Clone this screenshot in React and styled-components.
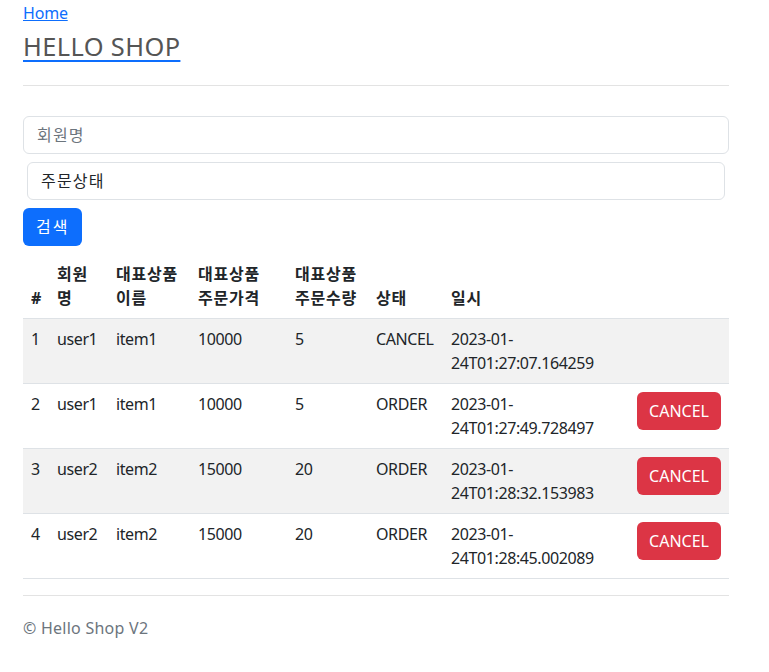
import React from "react";
import styled, { createGlobalStyle } from "styled-components";

const Global = createGlobalStyle`
  * { box-sizing: border-box; }
  body {
    margin: 0;
    font-family: "Noto Sans", "Noto Sans CJK KR", sans-serif;
    font-size: 16px;
    line-height: 1.5;
    color: #212529;
    background: #fff;
  }
`;

const Page = styled.div`
  width: 706px;
  margin-left: 23px;
  padding-top: 1px;
`;

const HomeLink = styled.a`
  display: inline-block;
  color: #0d6efd;
  text-decoration: underline;
  line-height: 24px;
  letter-spacing: -0.2px;
`;

const Title = styled.h3`
  margin: 6px 0 0;
  font-size: 25.4px;
  font-weight: 400;
  line-height: 1.2;
  letter-spacing: 0.4px;
`;

const TitleLink = styled.a`
  color: #555;
  text-decoration: underline;
  text-decoration-color: #0d6efd;
  text-decoration-thickness: 2px;
  text-underline-offset: 4px;
`;

const Rule = styled.hr`
  margin: ${(p) => p.$mt}px 0 ${(p) => p.$mb}px;
  border: 0;
  border-top: 1px solid #e3e3e3;
`;

const Form = styled.form`
  display: flex;
  flex-direction: column;
  align-items: flex-start;
  gap: 8px;
`;

const Input = styled.div`
  width: ${(p) => (p.$inset ? "698px" : "100%")};
  margin-left: ${(p) => (p.$inset ? "4px" : "0")};
  height: 38px;
  padding: 6px 13px;
  border: 1px solid #dee2e6;
  border-radius: 6px;
  color: ${(p) => (p.$placeholder ? "#6c757d" : "#212529")};
  line-height: 24px;
  letter-spacing: 1.2px;
`;

const Button = styled.button`
  height: 38px;
  padding: ${(p) => (p.$variant === "danger" ? "6px 12px" : "6px 13px")};
  border: 0;
  border-radius: 6px;
  font-family: inherit;
  font-size: 16px;
  line-height: 24px;
  letter-spacing: ${(p) => (p.$variant === "danger" ? "0" : "2px")};
  color: #fff;
  background: ${(p) => (p.$variant === "danger" ? "#dc3545" : "#0d6efd")};
  cursor: pointer;
`;

const Table = styled.table`
  width: 706px;
  border-collapse: collapse;
  table-layout: fixed;
`;

const Th = styled.th`
  padding: 8px;
  text-align: left;
  vertical-align: bottom;
  font-weight: 700;
  border-bottom: 1px solid #dee2e6;
  line-height: 24px;
  letter-spacing: 0.8px;
  word-break: keep-all;
`;

const Tr = styled.tr`
  background: ${(p) => (p.$striped ? "#f2f2f2" : "#fff")};
`;

const Td = styled.td`
  padding: 8px;
  vertical-align: top;
  border-bottom: 1px solid #dee2e6;
  line-height: 24px;
  letter-spacing: -0.4px;
  text-align: ${(p) => (p.$right ? "right" : "left")};
`;

const Footer = styled.footer`
  margin-top: 20px;
  color: #6c757d;
  line-height: 24px;
  letter-spacing: 0.25px;
`;

const orders = [
  { id: 1, user: "user1", item: "item1", price: 10000, count: 5, status: "CANCEL", date: ["2023-01-", "24T01:27:07.164259"] },
  { id: 2, user: "user1", item: "item1", price: 10000, count: 5, status: "ORDER", date: ["2023-01-", "24T01:27:49.728497"] },
  { id: 3, user: "user2", item: "item2", price: 15000, count: 20, status: "ORDER", date: ["2023-01-", "24T01:28:32.153983"] },
  { id: 4, user: "user2", item: "item2", price: 15000, count: 20, status: "ORDER", date: ["2023-01-", "24T01:28:45.002089"] },
];

const widths = [26, 59, 82, 97, 81, 75, 185, 101];

export default function App() {
  return (
    <Page>
      <Global />
      <HomeLink href="#">Home</HomeLink>
      <Title>
        <TitleLink href="#">HELLO SHOP</TitleLink>
      </Title>
      <Rule $mt={24} $mb={30} />
      <Form onSubmit={(e) => e.preventDefault()}>
        <Input $placeholder>회원명</Input>
        <Input $inset>주문상태</Input>
        <Button type="submit">검색</Button>
        <Table>
          <colgroup>
            {widths.map((w, i) => (
              <col key={i} style={{ width: w }} />
            ))}
          </colgroup>
          <thead>
            <tr>
              <Th>#</Th>
              <Th>
                회원<wbr />명
              </Th>
              <Th>대표상품 이름</Th>
              <Th>대표상품 주문가격</Th>
              <Th>대표상품 주문수량</Th>
              <Th>상태</Th>
              <Th>일시</Th>
              <Th></Th>
            </tr>
          </thead>
          <tbody>
            {orders.map((o, i) => (
              <Tr key={o.id} $striped={i % 2 === 0}>
                <Td>{o.id}</Td>
                <Td>{o.user}</Td>
                <Td>{o.item}</Td>
                <Td>{o.price}</Td>
                <Td>{o.count}</Td>
                <Td>{o.status}</Td>
                <Td>
                  {o.date[0]}
                  <wbr />
                  {o.date[1]}
                </Td>
                <Td $right>
                  {o.status === "ORDER" && (
                    <Button type="button" $variant="danger">CANCEL</Button>
                  )}
                </Td>
              </Tr>
            ))}
          </tbody>
        </Table>
      </Form>
      <Rule $mt={16} $mb={0} />
      <Footer>© Hello Shop V2</Footer>
    </Page>
  );
}
